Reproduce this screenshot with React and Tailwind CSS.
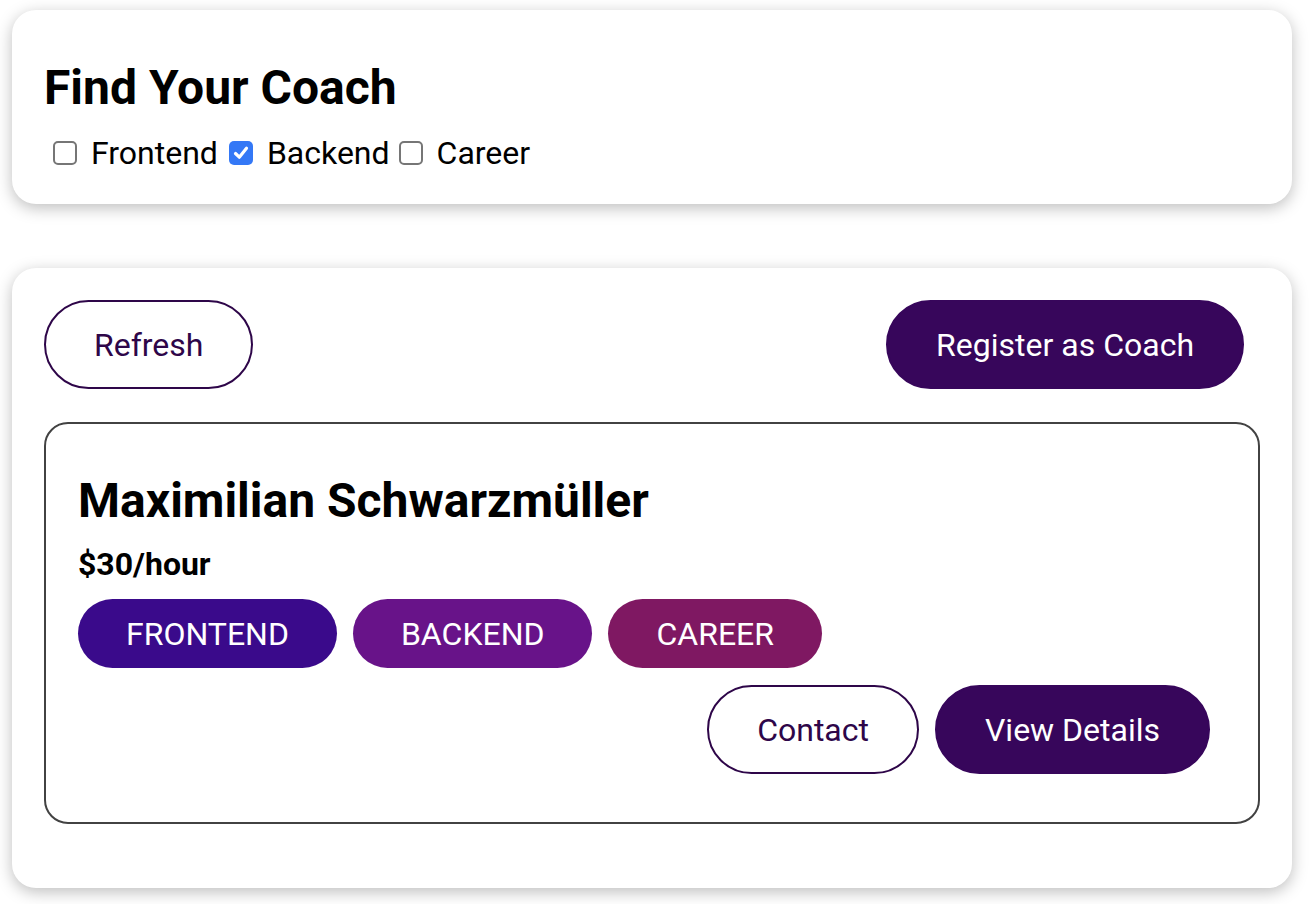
import React from "react";

function Box({ checked }) {
  if (checked) {
    return (
      <span className="ml-[9px] flex h-[24px] w-[24px] items-center justify-center rounded-[5px] bg-[#3478f6]">
        <svg width="18" height="18" viewBox="0 0 18 18" fill="none">
          <path d="M3.5 9.5 L7.3 13.2 L14.5 4.3" stroke="white" strokeWidth="3.2" strokeLinecap="round" strokeLinejoin="round" />
        </svg>
      </span>
    );
  }
  return <span className="ml-[9px] block h-[24px] w-[24px] rounded-[5px] border-2 border-[#767676] bg-white" />;
}

function Option({ label, checked, gap }) {
  return (
    <div className={`flex items-center ${gap}`}>
      <Box checked={checked} />
      <span className="ml-[14px] text-[32px] leading-[40px] text-black">{label}</span>
    </div>
  );
}

function Badge({ text, color }) {
  return (
    <span className={`mr-[16px] flex h-[69px] items-center rounded-[60px] px-[48px] text-[32px] uppercase text-white ${color}`}>
      {text}
    </span>
  );
}

export default function App() {
  return (
    <div
      className="min-h-[904px] bg-white px-[12px] pt-[10px] text-black"
      style={{ fontFamily: "Roboto, 'Liberation Sans', sans-serif" }}
    >
      <section className="h-[194px] w-[1280px] rounded-[24px] bg-white px-[32px] pt-[32px] shadow-[0_4px_16px_rgba(0,0,0,0.26)]">
        <h2 className="mt-[18px] mb-[17px] text-[48px] font-bold leading-[56px]">Find Your Coach</h2>
        <div className="flex h-[40px] items-center">
          <Option label="Frontend" gap="mr-[2px]" />
          <Option label="Backend" gap="mr-[0px]" checked />
          <Option label="Career" />
        </div>
      </section>

      <section className="mt-[64px] w-[1280px] rounded-[24px] bg-white p-[32px] shadow-[0_4px_16px_rgba(0,0,0,0.26)]">
        <div className="flex justify-between">
          <button className="flex h-[89px] items-center rounded-[60px] border-2 border-[#2e0649] bg-transparent px-[48px] text-[32px] text-[#2e0649]">
            Refresh
          </button>
          <button className="mr-[16px] flex h-[89px] items-center rounded-[60px] border-2 border-[#37065b] bg-[#37065b] px-[48px] text-[32px] text-white">
            Register as Coach
          </button>
        </div>

        <div className="mt-[33px] mb-[32px] rounded-[24px] border-2 border-[#424242] p-[32px]">
          <h3 className="mt-[17px] mb-[17px] text-[48px] font-bold leading-[56px]">Maximilian Schwarzmüller</h3>
          <h4 className="text-[32px] font-bold leading-[37px]">$30/hour</h4>
          <div className="mt-[16px] flex">
            <Badge text="Frontend" color="bg-[#3a0a8b]" />
            <Badge text="Backend" color="bg-[#681389]" />
            <Badge text="Career" color="bg-[#7f1862]" />
          </div>
          <div className="mt-[17px] mb-[16px] flex justify-end">
            <button className="mr-[16px] flex h-[89px] items-center rounded-[60px] border-2 border-[#2e0649] bg-transparent px-[48px] text-[32px] text-[#2e0649]">
              Contact
            </button>
            <button className="mr-[16px] flex h-[89px] items-center rounded-[60px] border-2 border-[#37065b] bg-[#37065b] px-[48px] text-[32px] text-white">
              View Details
            </button>
          </div>
        </div>
      </section>
    </div>
  );
}
